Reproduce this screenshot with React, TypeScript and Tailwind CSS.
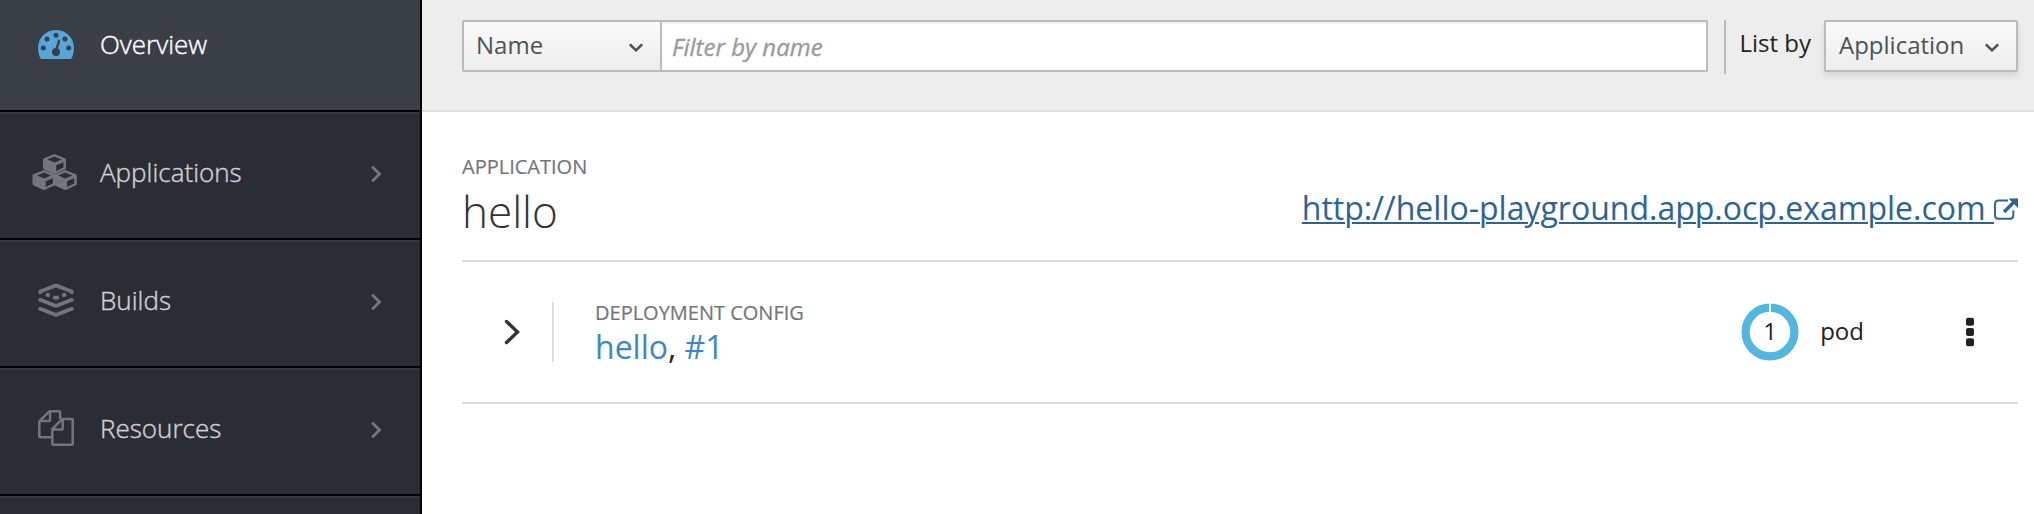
import React from "react";

function Row({ label, icon, active }: { label: string; icon: React.ReactNode; active?: boolean }) {
  return (
    <div
      className={
        active
          ? "flex h-[110px] shrink-0 items-start bg-[#393f45] pt-[22px]"
          : "flex h-[126px] shrink-0 items-start border-t-2 border-[#34383f] bg-[#2b2d35] pt-[36px]"
      }
    >
      <div className="flex h-[44px] w-[100px] shrink-0 items-center pl-[32px]">{icon}</div>
      <span
        className={
          active
            ? "flex-1 text-[26px] leading-[44px] font-light text-white [-webkit-text-stroke:0.4px_#fff]"
            : "flex-1 text-[26px] leading-[44px] font-light text-[#d1d1d1] [-webkit-text-stroke:0.4px_#d1d1d1]"
        }
      >
        {label}
      </span>
      {!active && label && (
        <svg className="mt-[14px] mr-[38px] h-[20px] w-[12px]" viewBox="0 0 12 20" fill="none" stroke="#72767b" strokeWidth="2.800">
          <path d="M2.200 2.800 9.500 10l-7.300 7.200" />
        </svg>
      )}
    </div>
  );
}

function Dashboard() {
  return (
    <svg className="mt-[1px] ml-[6px] h-[30px] w-[36px]" viewBox="0 0 36 30">
      <path
        fill="#57a5db"
        d="M18 0a18 18 0 0 1 18 18c0 4-1 8-2.600 10.500-.4.5-.8.500-1.400.500H4c-.6 0-1 0-1.400-.5C1 26 0 22 0 18A18 18 0 0 1 18 0Z"
      />
      <g fill="#393f45">
        <circle cx="18" cy="5.300" r="2.500" />
        <circle cx="9" cy="9" r="2.500" />
        <circle cx="27" cy="9" r="2.500" />
        <circle cx="5.300" cy="18" r="2.500" />
        <circle cx="30.700" cy="18" r="2.500" />
        <circle cx="18" cy="22" r="4" />
      </g>
      <path d="M18 21 21 10.800" stroke="#393f45" strokeWidth="2.400" strokeLinecap="round" />
    </svg>
  );
}

function Cube({ x, y }: { x: number; y: number }) {
  return (
    <g transform={`translate(${x} ${y})`}>
      <path
        fill="#72767b"
        d="M11.500 0 22 4.200q1 .4 1 1.500v8q0 1-.9 1.500L12.500 19.800q-1 .4-2 0L.9 15.200Q0 14.700 0 13.700v-8q0-1.100 1-1.500Z"
      />
      <path fill="#2b2d35" d="M11.500 2.600 18.500 5.500l-7 3L4.500 5.500ZM13.200 11.300l7.200-3.100v5.200l-7.200 3.500Z" />
    </g>
  );
}

function Cubes() {
  return (
    <svg className="mt-[1px] h-[37px] w-[46px] shrink-0" viewBox="0 0 46 37">
      <Cube x={11} y={0} />
      <Cube x={0.5} y={16} />
      <Cube x={21.800} y={16} />
    </svg>
  );
}

function Layers() {
  return (
    <svg
      className="mt-[1px] ml-[6px] h-[36px] w-[36px]"
      viewBox="0 0 36 36"
      fill="none"
      stroke="#72767b"
      strokeWidth="3.700"
      strokeLinecap="round"
      strokeLinejoin="round"
    >
      <path d="M2.200 9.500V8.500L18 2.600l15.800 5.900v1" />
      <path d="m2.200 16.800 15.800 6.200 15.800-6.200" />
      <path d="m2.200 25.700 15.800 6.300 15.800-6.300" />
      <g strokeLinecap="butt">
        <path d="m8 11.200 3.800 1.500M28 11.200l-3.800 1.500M15 14l3 1.100 3-1.100" />
      </g>
    </svg>
  );
}

function Files() {
  return (
    <svg
      className="ml-[6px] h-[36px] w-[36px]"
      viewBox="0 0 36 36"
      fill="none"
      stroke="#72767b"
      strokeWidth="2.500"
      strokeLinejoin="round"
    >
      <path d="M13 27.200H2.200q-.9 0-.9-.9V11.400L11.400 1.300h9.800q.9 0 .9.900V9" />
      <path d="M12 1.500v8.600q0 1-1 1H1.500" />
      <path d="M24.200 9.100h9.600q.9 0 .9.900v23.800q0 .9-.9.900H15.200q-.9 0-.9-.9V19Z" />
      <path d="M24.700 9.300v9.200q0 1-1 1h-9.200" />
    </svg>
  );
}

function Caret() {
  return (
    <svg
      className="mt-[6px] h-[10px] w-[14px]"
      viewBox="0 0 14 10"
      fill="none"
      stroke="#4d5258"
      strokeWidth="2.500"
      strokeLinecap="round"
    >
      <path d="M1.500 2 7 7.300 12.500 2" />
    </svg>
  );
}

function ExternalLink() {
  return (
    <svg className="mt-[1px] h-[22px] w-[24px]" viewBox="0 0 24 22" fill="none" stroke="#29639b">
      <path strokeWidth="1.900" d="M14 2.500H4.500Q1 2.500 1 6v11.500Q1 20.800 4.500 20.800h11.500q3.300 0 3.300-3.300V12.500" />
      <path strokeWidth="3.200" d="M10 14 20 4" />
      <path fill="#29639b" stroke="none" d="M14.500.500H24V10Z" />
    </svg>
  );
}

function PodDonut({ count }: { count: number }) {
  return (
    <div className="grid h-[58px] w-[58px] place-items-center">
      <svg className="col-start-1 row-start-1 h-[58px] w-[58px]" viewBox="0 0 58 58" fill="none">
        <circle cx="29" cy="29" r="24.400" stroke="#51b6e0" strokeWidth="8.200" />
        <path d="M29 0v10" stroke="#fff" strokeWidth="1.800" />
      </svg>
      <span className="col-start-1 row-start-1 pb-[2px] leading-[30px]">{count}</span>
    </div>
  );
}

export default function App() {
  return (
    <div className="flex h-[514px] w-[2034px] overflow-hidden bg-white font-['Open_Sans',sans-serif] text-[24px] text-[#222]">
      <nav className="flex w-[422px] shrink-0 flex-col gap-[2px] border-r-2 border-black bg-black">
        <Row active label="Overview" icon={<Dashboard />} />
        <Row label="Applications" icon={<Cubes />} />
        <Row label="Builds" icon={<Layers />} />
        <Row label="Resources" icon={<Files />} />
        <Row label="" icon={null} />
      </nav>
      <main className="flex flex-1 flex-col">
        <header className="flex h-[112px] items-start border-b-2 border-[#e1e1e1] bg-[#ededed] pt-[20px] pr-[16px] pl-[40px]">
          <div className="flex h-[52px] w-[200px] items-center justify-between rounded-l-[2px] border-2 border-[#bbb] bg-linear-to-b from-[#fafafa] to-[#ededed] pr-[17px] pb-[3px] pl-[12px] text-[#4d5258]">
            Name
            <Caret />
          </div>
          <div className="flex h-[52px] flex-1 items-center rounded-r-[2px] border-2 border-l-0 border-[#bbb] bg-white pt-[1px] pl-[10px] text-[#999] italic shadow-[inset_0_2px_2px_rgba(3,3,3,0.05)] [-webkit-text-stroke:0.3px_#999]">
            Filter by name
          </div>
          <div className="ml-[16px] h-[54px] w-[2px] bg-[#bbb]" />
          <span className="ml-[13px] leading-[46px]">List by</span>
          <div className="ml-[13px] flex h-[52px] w-[194px] items-center justify-between rounded-[2px] border-2 border-[#bbb] bg-linear-to-b from-[#fafafa] to-[#ededed] pr-[17px] pb-[3px] pl-[13px] text-[#4d5258] shadow-[0_4px_6px_rgba(3,3,3,0.1)]">
            Application
            <Caret />
          </div>
        </header>
        <section className="pr-[16px] pl-[40px]">
          <div className="flex h-[150px] items-start justify-between border-b-2 border-[#ddd]">
            <div className="flex flex-col pt-[40px]">
              <span className="text-[20px] leading-[30px] text-[#72767b] [-webkit-text-stroke:0.2px_#72767b]">APPLICATION</span>
              <span className="text-[44px] leading-[58px] font-light text-[#333]">hello</span>
            </div>
            <div className="flex items-center pt-[74px] text-[32px] leading-[44px] text-[#29639b]">
              <span className="-ml-px whitespace-pre underline decoration-2 underline-offset-[2px]">
                {"http://hello-playground.app.ocp.example.com "}
              </span>
              <ExternalLink />
            </div>
          </div>
          <div className="flex h-[142px] items-center border-b-2 border-[#ddd]">
            <svg
              className="ml-[42px] h-[28px] w-[17px]"
              viewBox="0 0 17 28"
              fill="none"
              stroke="#333"
              strokeWidth="3.400"
              strokeLinecap="round"
            >
              <path d="M2.500 3.500 13.500 14l-11 10.500" />
            </svg>
            <div className="ml-[31px] h-[60px] w-[2px] bg-[#ddd]" />
            <div className="ml-[41px] flex flex-1 flex-col">
              <span className="text-[20px] leading-[30px] text-[#72767b] [-webkit-text-stroke:0.2px_#72767b]">DEPLOYMENT CONFIG</span>
              <span className="text-[32px] leading-[38px]">
                <span className="text-[#3a87cf]">hello</span>, <span className="text-[#3a87cf]">#1</span>
              </span>
            </div>
            <PodDonut count={1} />
            <span className="ml-[21px] pb-[2px] leading-[30px]">pod</span>
            <svg className="mr-[44px] ml-[102px] h-[30px] w-[8px]" viewBox="0 0 8 30" fill="#222">
              <rect width="8" height="8" y="0.700" rx="2" />
              <rect width="8" height="8" y="11" rx="2" />
              <rect width="8" height="8" y="21.300" rx="2" />
            </svg>
          </div>
        </section>
      </main>
    </div>
  );
}
